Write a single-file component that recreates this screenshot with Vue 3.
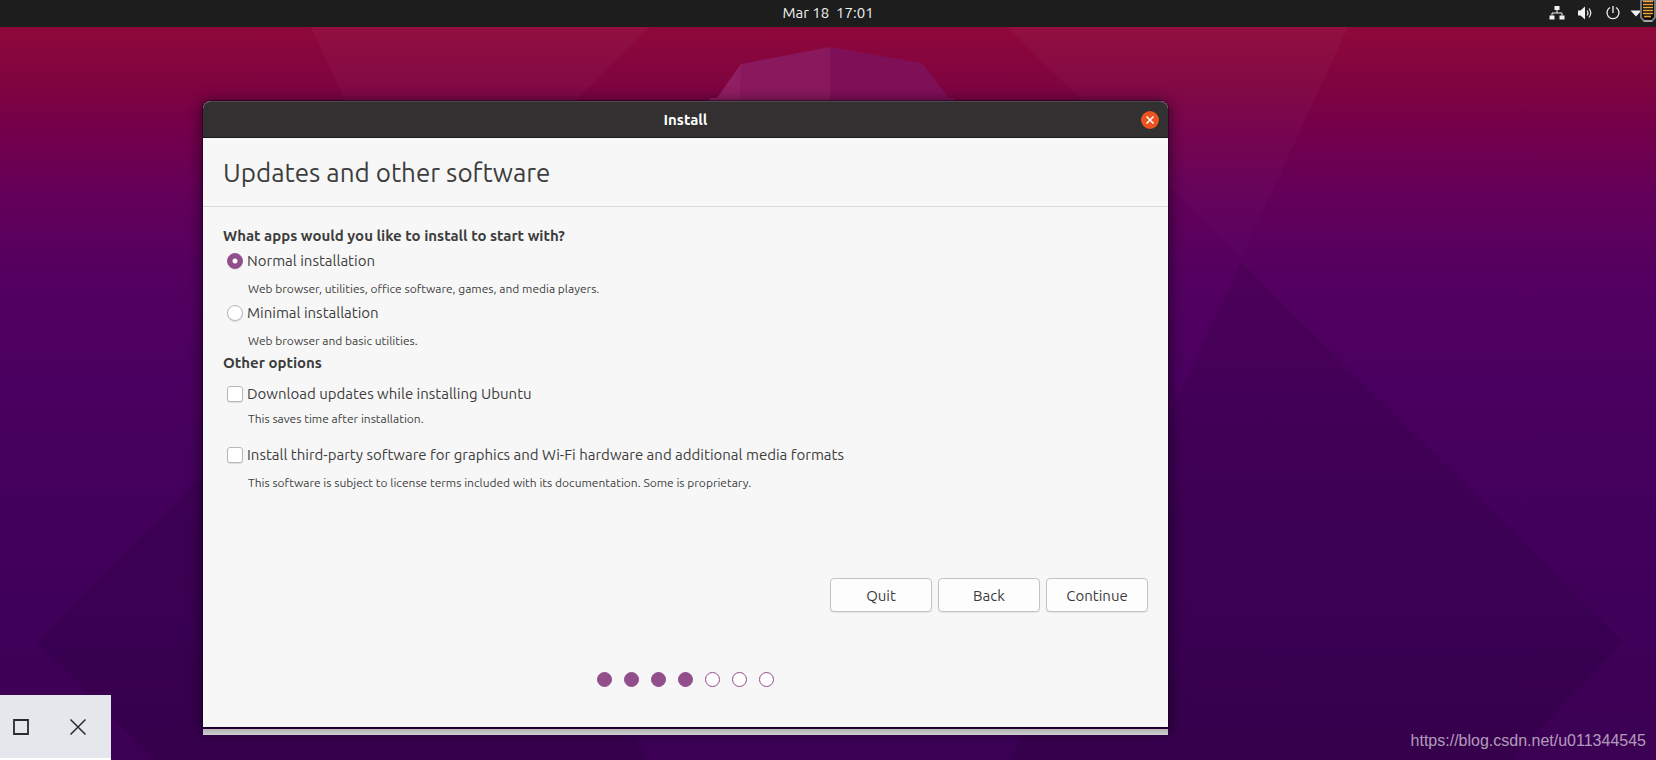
<script setup>
import { ref } from 'vue';

const installType = ref('normal');
const downloadUpdates = ref(false);
const thirdParty = ref(false);

const totalSteps = 7;
const currentStep = ref(4);
</script>

<template>
  <div class="desktop">
    <!-- Wallpaper -->
    <svg class="wallpaper" viewBox="0 0 1656 760" preserveAspectRatio="none" aria-hidden="true">
      <defs>
        <linearGradient id="beam" x1="0" y1="27" x2="0" y2="258" gradientUnits="userSpaceOnUse">
          <stop offset="0" stop-color="#fff" stop-opacity="0.03" />
          <stop offset="1" stop-color="#fff" stop-opacity="0.01" />
        </linearGradient>
      </defs>
      <polygon points="311,27 650,27 417,258" fill="url(#beam)" />
      <polygon points="1008,27 1348,27 1241,258" fill="url(#beam)" />
      <polygon points="1241,262 1623,642 1510,760 1010,760" fill="#000" fill-opacity="0.08" />
      <polygon points="415,262 37,642 155,760 648,760" fill="#000" fill-opacity="0.08" />
      <polygon points="709,101 711,98 717,98 741,64 830,47 830,140 709,140" fill="#8a185d" />
      <polygon points="709,101 711,98 717,98 741,64 739,140 709,140" fill="#901e62" />
      <polygon points="830,47 922,63 949,98 955,98 957,140 830,140" fill="#7f0f57" />
    </svg>

    <header class="topbar">
      <time class="clock">Mar 18&nbsp; 17:01</time>
      <div class="tray">
        <svg class="tray-icon" viewBox="0 0 16 16" aria-label="Network">
          <path d="M5.500 1h5v4h-5zM0.500 10.500h5v4h-5zM10.500 10.500h5v4h-5z" fill="#f2f2f2" />
          <path d="M8 5v3M3 10.500V8h10v2.500" fill="none" stroke="#f2f2f2" />
        </svg>
        <svg class="tray-icon" viewBox="0 0 16 16" aria-label="Volume">
          <path d="M1 5.500h2.500L8 1.500v13l-4.500-4H1z" fill="#f2f2f2" />
          <path d="M10 5.500q2 2.500 0 5M12 3.500q3.500 4.500 0 9" fill="none" stroke="#f2f2f2" stroke-width="1.200" />
        </svg>
        <svg class="tray-icon" viewBox="0 0 16 16" aria-label="Power">
          <path d="M5 2.500a6 6 0 1 0 6 0M8 1v7" fill="none" stroke="#f2f2f2" stroke-width="1.300" />
        </svg>
        <svg class="tray-arrow" viewBox="0 0 12 16" aria-hidden="true">
          <path d="M0.500 5.500h11L6 11.500z" fill="#f2f2f2" />
        </svg>
      </div>
    </header>

    <svg class="meter" viewBox="0 0 16 23" aria-hidden="true">
      <path d="M1 0v17.500L4 21h8l3-3.500V0z" fill="#0d0d0d" stroke="#77797c" stroke-width="2" />
      <path d="M4 21h8" stroke="#a5a5a5" stroke-width="2" />
      <path d="M3 1.500h10M3 4.500h10M3 7.500h10M3 10.500h10M3 13.500h10M4 16.500h7" stroke="#f3a73a" stroke-width="1.300" />
    </svg>

    <main class="workspace">
      <section class="window">
        <div class="titlebar">
          <span class="window-title">Install</span>
          <button class="close-btn" type="button" aria-label="Close">
            <svg viewBox="0 0 18 18"><path d="M5.500 5.500l7 7M12.500 5.500l-7 7" stroke="#fff" stroke-width="1.500" /></svg>
          </button>
        </div>

        <h1 class="page-title">Updates and other software</h1>

        <form class="content" @submit.prevent>
          <h2 class="group-title">What apps would you like to install to start with?</h2>
          <div class="option">
            <label class="choice">
              <input v-model="installType" type="radio" name="type" value="normal" />
              Normal installation
            </label>
            <p class="hint">Web browser, utilities, office software, games, and media players.</p>
          </div>
          <div class="option">
            <label class="choice">
              <input v-model="installType" type="radio" name="type" value="minimal" />
              Minimal installation
            </label>
            <p class="hint">Web browser and basic utilities.</p>
          </div>

          <h2 class="group-title other">Other options</h2>
          <div class="option updates">
            <label class="choice">
              <input v-model="downloadUpdates" type="checkbox" />
              Download updates while installing Ubuntu
            </label>
            <p class="hint">This saves time after installation.</p>
          </div>
          <div class="option third-party">
            <label class="choice">
              <input v-model="thirdParty" type="checkbox" />
              Install third-party software for graphics and Wi-Fi hardware and additional media formats
            </label>
            <p class="hint">This software is subject to license terms included with its documentation. Some is proprietary.</p>
          </div>

          <div class="buttons">
            <button type="button">Quit</button>
            <button type="button">Back</button>
            <button type="submit">Continue</button>
          </div>
        </form>

        <div class="steps">
          <span v-for="n in totalSteps" :key="n" class="step" :class="{ done: n <= currentStep }"></span>
        </div>
      </section>
      <div class="window-behind"></div>
    </main>

    <div class="host-controls">
      <button type="button" aria-label="Maximize">
        <svg viewBox="0 0 18 18"><path d="M2 2h14v14H2z" fill="none" stroke="#2b2b2b" stroke-width="1.800" /></svg>
      </button>
      <button type="button" aria-label="Close">
        <svg viewBox="0 0 18 18"><path d="M1.500 1.500l15 15M16.500 1.500l-15 15" stroke="#2b2b2b" stroke-width="1.500" /></svg>
      </button>
    </div>

    <a class="source-link" href="https://blog.csdn.net/u011344545">https://blog.csdn.net/u011344545</a>
  </div>
</template>

<style>
body {
  margin: 0;
  background: #35004e;
}
</style>

<style scoped>
.desktop {
  position: relative;
  min-height: 100vh;
  overflow: hidden;
  background: linear-gradient(#8f083a 27px, #80043f 80px, #74004b 130px, #62005a 200px, #550060 270px, #4a0060 380px, #43005c 500px, #3e0058 640px, #3b0053 760px);
  font-family: Ubuntu, "Noto Sans", sans-serif;
  font-size: 15px;
  line-height: 20px;
  color: #3d3d3d;
}

.wallpaper {
  position: absolute;
  inset: 0;
  width: 100%;
  height: 100%;
}

/* Top panel */
.topbar {
  position: relative;
  display: grid;
  grid-template-columns: 1fr auto 1fr;
  align-items: center;
  box-sizing: border-box;
  height: 27px;
  padding: 0 14px 1px;
  background: #1d1d1d;
  color: #f2f2f2;
}
.clock {
  grid-column: 2;
}
.tray {
  display: flex;
  justify-content: flex-end;
  align-items: center;
  gap: 12px;
}
.tray-icon {
  width: 16px;
  height: 16px;
}
.tray-arrow {
  width: 12px;
  height: 16px;
  margin-left: -3px;
}
.meter {
  position: absolute;
  top: 0;
  right: 0;
  width: 16px;
  height: 23px;
}

/* Installer window */
.workspace {
  position: relative;
  padding: 74px 488px 25px 203px;
}
.window {
  border-radius: 8px 8px 0 0;
  background: #f7f7f7;
  box-shadow: 0 0 0 1px rgba(20, 0, 30, 0.5), 0 2px 14px 2px rgba(0, 0, 0, 0.5);
}
.titlebar {
  display: grid;
  grid-template-columns: 1fr auto 1fr;
  align-items: center;
  box-sizing: border-box;
  height: 37px;
  padding: 0 9px;
  border-top: 1px solid #4d4b4b;
  border-bottom: 1px solid #1c1a1a;
  border-radius: 8px 8px 0 0;
  background: #323030;
}
.window-title {
  grid-column: 2;
  color: #fff;
  font-weight: 700;
}
.close-btn {
  justify-self: end;
  width: 18px;
  height: 18px;
  padding: 0;
  border: none;
  border-radius: 50%;
  background: #e95420;
}
.close-btn svg {
  display: block;
}

.page-title {
  margin: 0;
  padding: 17px 20px 15px;
  border-bottom: 1px solid #dadada;
  font-size: 26px;
  font-weight: 400;
  line-height: 36px;
}

.content {
  padding: 19px 20px 0;
}
.group-title {
  margin: 0;
  font-size: 15px;
  font-weight: 700;
}
.group-title.other {
  margin-top: 2px;
}
.option {
  display: flex;
  flex-direction: column;
  gap: 8px;
  margin-top: 5px;
}
.option + .option {
  margin-top: 4px;
}
.option.updates {
  gap: 5px;
  margin-top: 11px;
}
.option.third-party {
  margin-top: 16px;
}
.choice {
  display: flex;
  align-items: center;
  gap: 4px;
  padding-left: 4px;
}
.choice input {
  appearance: none;
  box-sizing: border-box;
  flex: none;
  width: 16px;
  height: 16px;
  margin: 0;
  border: 1px solid #b8b8b8;
  border-radius: 3px;
  background: #fff;
  box-shadow: 0 1px 1px rgba(0, 0, 0, 0.1);
}
.choice input[type="radio"] {
  border-radius: 50%;
}
.choice input[type="radio"]:checked {
  border-color: #924d8b;
  background: radial-gradient(circle, #fff 2px, #924d8b 3px);
}
.choice input[type="checkbox"]:checked {
  background: #924d8b;
}
.hint {
  margin: 0;
  padding-left: 25px;
  font-size: 12px;
}

.buttons {
  display: flex;
  justify-content: flex-end;
  gap: 6px;
  margin-top: 85px;
}
.buttons button {
  width: 102px;
  height: 34px;
  padding: 0;
  border: 1px solid #c3c3c3;
  border-radius: 4px;
  background: #fdfdfd;
  box-shadow: 0 1px 1px rgba(0, 0, 0, 0.08);
  color: #3d3d3d;
  font-family: inherit;
  font-size: 15px;
}

.steps {
  display: flex;
  justify-content: center;
  gap: 12px;
  padding: 60px 0 40px;
}
.step {
  box-sizing: border-box;
  width: 15px;
  height: 15px;
  border: 1px solid #924d8b;
  border-radius: 50%;
  background: #fff;
}
.step.done {
  background: #924d8b;
}

.window-behind {
  position: relative;
  height: 6px;
  margin-top: 2px;
  background: linear-gradient(#b4b4b4, #cfcfcf);
}

/* Buttons of the outer window, cut off by the screen corner */
.host-controls {
  position: absolute;
  bottom: 0;
  left: 0;
  display: flex;
  align-items: center;
  gap: 39px;
  height: 63px;
  padding: 0 24px 0 12px;
  border-bottom: 2px solid #fff;
  background: #e4e7eb;
}
.host-controls button {
  width: 18px;
  height: 18px;
  padding: 0;
  border: none;
  background: none;
}
.host-controls svg {
  display: block;
}

.source-link {
  position: absolute;
  right: 10px;
  bottom: 9px;
  color: rgba(255, 255, 255, 0.62);
  font-family: "Liberation Sans", Arial, sans-serif;
  font-size: 16px;
  text-decoration: none;
}
</style>
